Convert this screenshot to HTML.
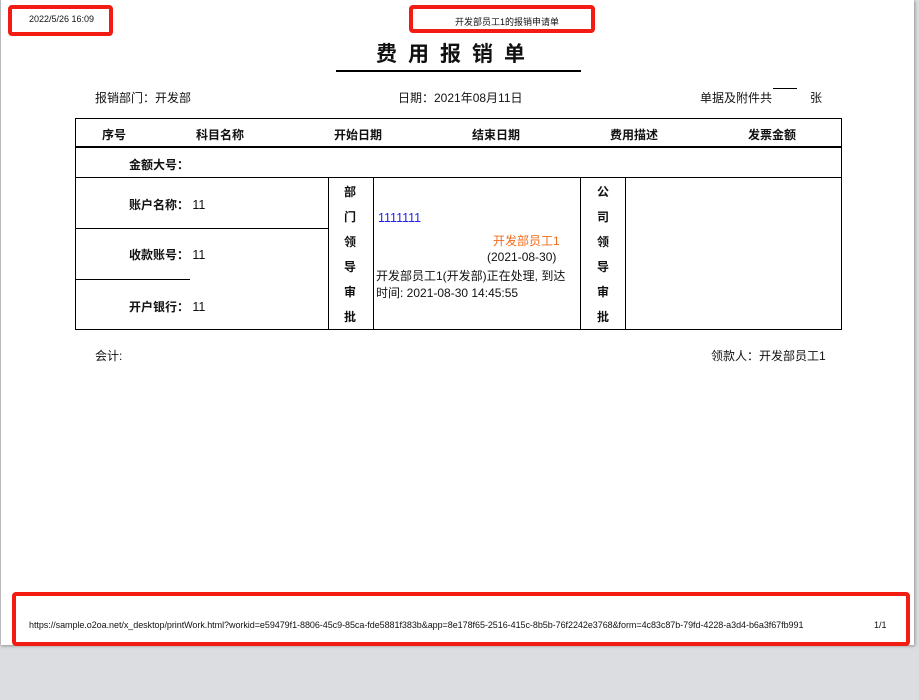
<!DOCTYPE html>
<html><head><meta charset="utf-8"><style>
body{margin:0;width:919px;height:700px;background:#dcdde0;position:relative;overflow:hidden;font-family:"Liberation Sans","Noto Sans CJK SC",sans-serif;color:#111}
.page{position:absolute;left:0;top:0;width:913px;height:645px;background:#fff;border-left:1px solid #bbb;box-shadow:1px 1px 3px rgba(0,0,0,.35)}
.a{position:absolute;white-space:nowrap}
.rb{position:absolute;border:4px solid #f31c12;border-radius:4px;box-sizing:border-box}
.ln{position:absolute;background:#000}
.b{font-weight:bold}
.f12{font-size:12px}
.v{font-size:12.5px}
</style></head><body>
<div class="page"></div>
<div class="rb" style="left:8px;top:5px;width:105px;height:31px"></div>
<div class="rb" style="left:409px;top:5px;width:186px;height:28px"></div>
<div class="rb" style="left:12px;top:592px;width:898px;height:54px"></div>
<div class="a" style="left:29px;top:14px;font-size:9px">2022/5/26 16:09</div>
<div class="a" style="left:455px;top:15px;font-size:9px">开发部员工1的报销申请单</div>
<div class="a b" style="left:376px;top:38px;font-size:21px;letter-spacing:11px">费用报销单</div>
<div class="ln" style="left:336px;top:70px;width:245px;height:2px"></div>
<div class="a f12" style="left:95px;top:89px">报销部门：开发部</div>
<div class="a f12" style="left:398px;top:89px">日期：2021年08月11日</div>
<div class="a f12" style="left:700px;top:89px">单据及附件共</div>
<div class="ln" style="left:773px;top:88px;width:24px;height:1px"></div>
<div class="a f12" style="left:810px;top:89px">张</div>
<div class="ln" style="left:75px;top:118px;width:767px;height:1px"></div>
<div class="ln" style="left:75px;top:146px;width:767px;height:2px"></div>
<div class="ln" style="left:75px;top:177px;width:767px;height:1px"></div>
<div class="ln" style="left:75px;top:329px;width:767px;height:1px"></div>
<div class="ln" style="left:75px;top:118px;width:1px;height:212px"></div>
<div class="ln" style="left:841px;top:118px;width:1px;height:212px"></div>
<div class="ln" style="left:328px;top:177px;width:1px;height:152px"></div>
<div class="ln" style="left:373px;top:177px;width:1px;height:152px"></div>
<div class="ln" style="left:580px;top:177px;width:1px;height:152px"></div>
<div class="ln" style="left:625px;top:177px;width:1px;height:152px"></div>
<div class="ln" style="left:75px;top:228px;width:253px;height:1px"></div>
<div class="ln" style="left:75px;top:279px;width:115px;height:1px"></div>
<div class="a b f12" style="left:102px;top:126px">序号</div>
<div class="a b f12" style="left:196px;top:126px">科目名称</div>
<div class="a b f12" style="left:334px;top:126px">开始日期</div>
<div class="a b f12" style="left:472px;top:126px">结束日期</div>
<div class="a b f12" style="left:610px;top:126px">费用描述</div>
<div class="a b f12" style="left:748px;top:126px">发票金额</div>
<div class="a b f12" style="left:129px;top:156px">金额大号：</div>
<div class="a f12" style="left:129px;top:196px"><b>账户名称：</b> <span class="v">11</span></div>
<div class="a f12" style="left:129px;top:246px"><b>收款账号：</b> <span class="v">11</span></div>
<div class="a f12" style="left:129px;top:298px"><b>开户银行：</b> <span class="v">11</span></div>
<div class="a b f12" style="left:344px;top:180px;line-height:25px;white-space:normal;width:14px">部门领导审批</div>
<div class="a b f12" style="left:597px;top:180px;line-height:25px;white-space:normal;width:14px">公司领导审批</div>
<div class="a v" style="left:378px;top:211px;color:#2222ee">1111111</div>
<div class="a f12" style="left:493px;top:232px;color:#f26a1b">开发部员工1</div>
<div class="a f12" style="left:487px;top:250px">(2021-08-30)</div>
<div class="a f12" style="left:376px;top:267px">开发部员工1(开发部)正在处理, 到达</div>
<div class="a f12" style="left:376px;top:284px">时间: 2021-08-30 14:45:55</div>
<div class="a f12" style="left:95px;top:347px">会计:</div>
<div class="a f12" style="left:711px;top:347px">领款人：开发部员工1</div>
<div class="a" style="left:29px;top:620px;font-size:9px;letter-spacing:-0.05px">https://sample.o2oa.net/x_desktop/printWork.html?workid=e59479f1-8806-45c9-85ca-fde5881f383b&amp;app=8e178f65-2516-415c-8b5b-76f2242e3768&amp;form=4c83c87b-79fd-4228-a3d4-b6a3f67fb991</div>
<div class="a" style="left:874px;top:620px;font-size:9px">1/1</div>
</body></html>
